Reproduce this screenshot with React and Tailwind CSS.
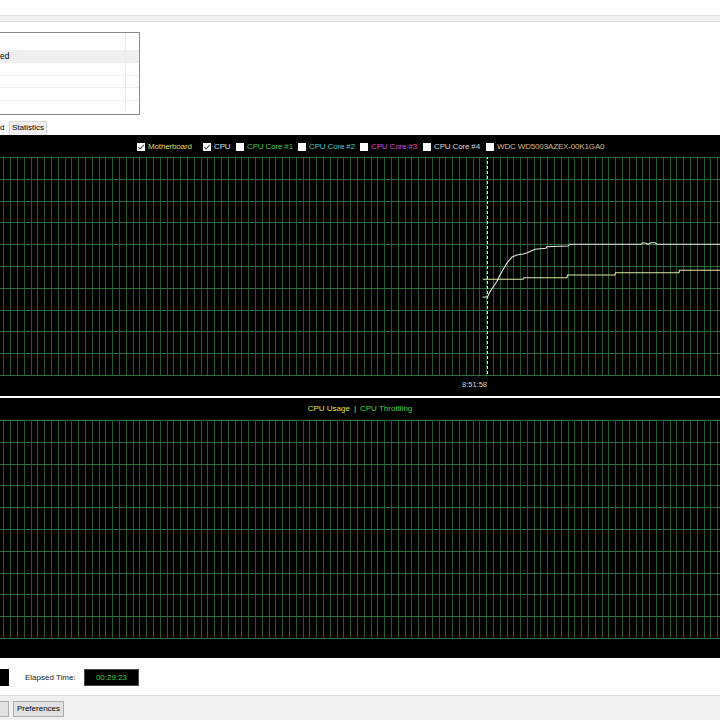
import React from 'react';

const vLines = Array.from({ length: 106 }, (_, i) => Math.round(3.3 + i * 6.8) + 0.5);
const hLines = Array.from({ length: 11 }, (_, i) => Math.round(i * 21.8) + 0.5);

const cpuLine = [
  [482.7, 297.3], [487.7, 296.7], [490, 291.7], [493.3, 286.7], [496.7, 281.7],
  [500, 275], [503.3, 269.3], [506.7, 263.3], [511.7, 257.3], [516.7, 255],
  [523.3, 254], [527.3, 252.7], [531.7, 250.7], [535, 249.3], [546, 248.3],
  [546.7, 246.7], [568.3, 246], [569.3, 244.3], [641, 244.3], [643, 242.8],
  [646, 243.2], [648, 244.3], [651, 242.8], [655, 242.8], [657, 244.3], [720, 244.3],
];

const mbLine = [
  [482.7, 279.3], [523, 279.3], [523.5, 277.7], [567, 277.7], [567.5, 275],
  [615, 275], [615.5, 272.7], [679, 272.7], [679.5, 270.3], [720, 270.3],
];

const toPoints = (pts, top) => pts.map(([x, y]) => `${x},${y - top}`).join(' ');

const legend = [
  { label: 'Motherboard', color: 'text-[#dcdc6a]', checked: true, width: 'w-[66px]' },
  { label: 'CPU', color: 'text-[#cfe3f2]', checked: true, width: 'w-[33px]' },
  { label: 'CPU Core #1', color: 'text-[#49c24a]', checked: false, width: 'w-[62px]' },
  { label: 'CPU Core #2', color: 'text-[#4cc6cc]', checked: false, width: 'w-[62px]' },
  { label: 'CPU Core #3', color: 'text-[#d54bd5]', checked: false, width: 'w-[63px]' },
  { label: 'CPU Core #4', color: 'text-[#d6d6d6]', checked: false, width: 'w-[63px]' },
  { label: 'WDC WD5003AZEX-00K1GA0', color: 'text-[#d9b98a]', checked: false, width: 'w-auto' },
];

function CheckBox({ checked }) {
  return (
    <span className="w-[8px] h-[8px] bg-white flex-none flex items-center justify-center">
      {checked && (
        <svg width="8" height="8" viewBox="0 0 8 8">
          <path d="M1.3 4.1 L3.1 5.9 L6.8 1.9" fill="none" stroke="#555" strokeWidth="1.1" />
        </svg>
      )}
    </span>
  );
}

function Grid({ children }) {
  return (
    <svg width="720" height="219" className="block">
      {vLines.map((x) => (
        <line key={'v' + x} x1={x} x2={x} y1="0" y2="219" stroke="#255a32" strokeWidth="1" />
      ))}
      {hLines.map((y) => (
        <line key={'h' + y} x1="0" x2="720" y1={y} y2={y} stroke="#2d6f3f" strokeWidth="1" />
      ))}
      {children}
    </svg>
  );
}

export default function App() {
  return (
    <div className="w-[720px] h-[720px] overflow-hidden bg-white flex flex-col font-['Liberation_Sans',Arial,sans-serif]">
      <div className="h-[15px] flex-none bg-white" />
      <div className="h-[7px] flex-none bg-[#f0f0f0] border-y border-[#e3e3e3]" />

      <div className="h-[113px] flex-none pt-[10px] flex flex-col">
        <div className="w-[140px] h-[83px] border border-l-0 border-[#8a8a8a] flex flex-col text-[8.5px] text-black">
          <div className="h-[17px] flex">
            <div className="w-[126px] border-r border-[#ececec]" />
          </div>
          <div className="h-[13px] flex bg-[#efefef] border-b border-[#ececec]">
            <div className="w-[126px] border-r border-[#ececec] leading-[12px]">ed</div>
          </div>
          {[0, 1, 2, 3].map((r) => (
            <div key={r} className="h-[13px] flex border-b border-[#efefef] last:border-b-0">
              <div className="w-[126px] border-r border-[#ececec]" />
            </div>
          ))}
        </div>
        <div className="mt-[6px] h-[14px] flex items-end text-[8px] text-black">
          <div className="w-[9px] h-[14px] leading-[13px]">d</div>
          <div className="h-[14px] px-[2px] bg-[#f0f0f0] border border-b-0 border-[#d9d9d9] leading-[12px]">Statistics</div>
        </div>
      </div>

      <div className="h-[523px] flex-none bg-black flex flex-col">
        <div className="h-[22px] flex items-center pl-[137px] pt-[2px] text-[8px]">
          {legend.map((item) => (
            <div key={item.label} className={`${item.width} flex items-center flex-none`}>
              <CheckBox checked={item.checked} />
              <span className={`ml-[3px] whitespace-nowrap tracking-[-0.15px] ${item.color}`}>{item.label}</span>
            </div>
          ))}
        </div>
        <Grid>
          <line x1="487.5" x2="487.5" y1="-6" y2="219" stroke="#e0e0e0" strokeWidth="1" strokeDasharray="3 2" />
          <polyline points={toPoints(mbLine, 157)} fill="none" stroke="#e4e7a6" strokeWidth="1.1" />
          <polyline points={toPoints(cpuLine, 157)} fill="none" stroke="#e8e8e8" strokeWidth="1.1" />
        </Grid>
        <div className="h-[20px] relative text-[7.5px] text-[#d8d8d8]">
          <span className="absolute left-[462px] top-[3px]">8:51:58</span>
        </div>
        <div className="h-[2px] bg-white" />
        <div className="h-[22px] flex items-center justify-center text-[8px] gap-[4px]">
          <span className="text-[#e3e34a]">CPU Usage</span>
          <span className="text-[#d8d8a0]">|</span>
          <span className="text-[#4ad14a]">CPU Throttling</span>
        </div>
        <Grid />
        <div className="flex-1" />
      </div>

      <div className="h-[37px] flex-none pt-[11px] flex items-start text-[8px] text-[#222]">
        <div className="w-[9px] h-[17px] bg-black" />
        <div className="ml-[16px] w-[59px] h-[17px] flex items-center">Elapsed Time:</div>
        <div className="w-[55px] h-[17px] bg-black border border-[#4a4a4a] flex items-center justify-center text-[#3fcf3f]">
          00:29:23
        </div>
      </div>

      <div className="flex-1 bg-[#f0f0f0] border-t border-[#dcdcdc] pt-[5px] flex items-start text-[8px] text-black">
        <div className="w-[9px] h-[16px] bg-[#e1e1e1] border border-l-0 border-[#adadad]" />
        <div className="ml-[4px] w-[51px] h-[16px] bg-[#e1e1e1] border border-[#adadad] flex items-center justify-center">
          Preferences
        </div>
      </div>
    </div>
  );
}
